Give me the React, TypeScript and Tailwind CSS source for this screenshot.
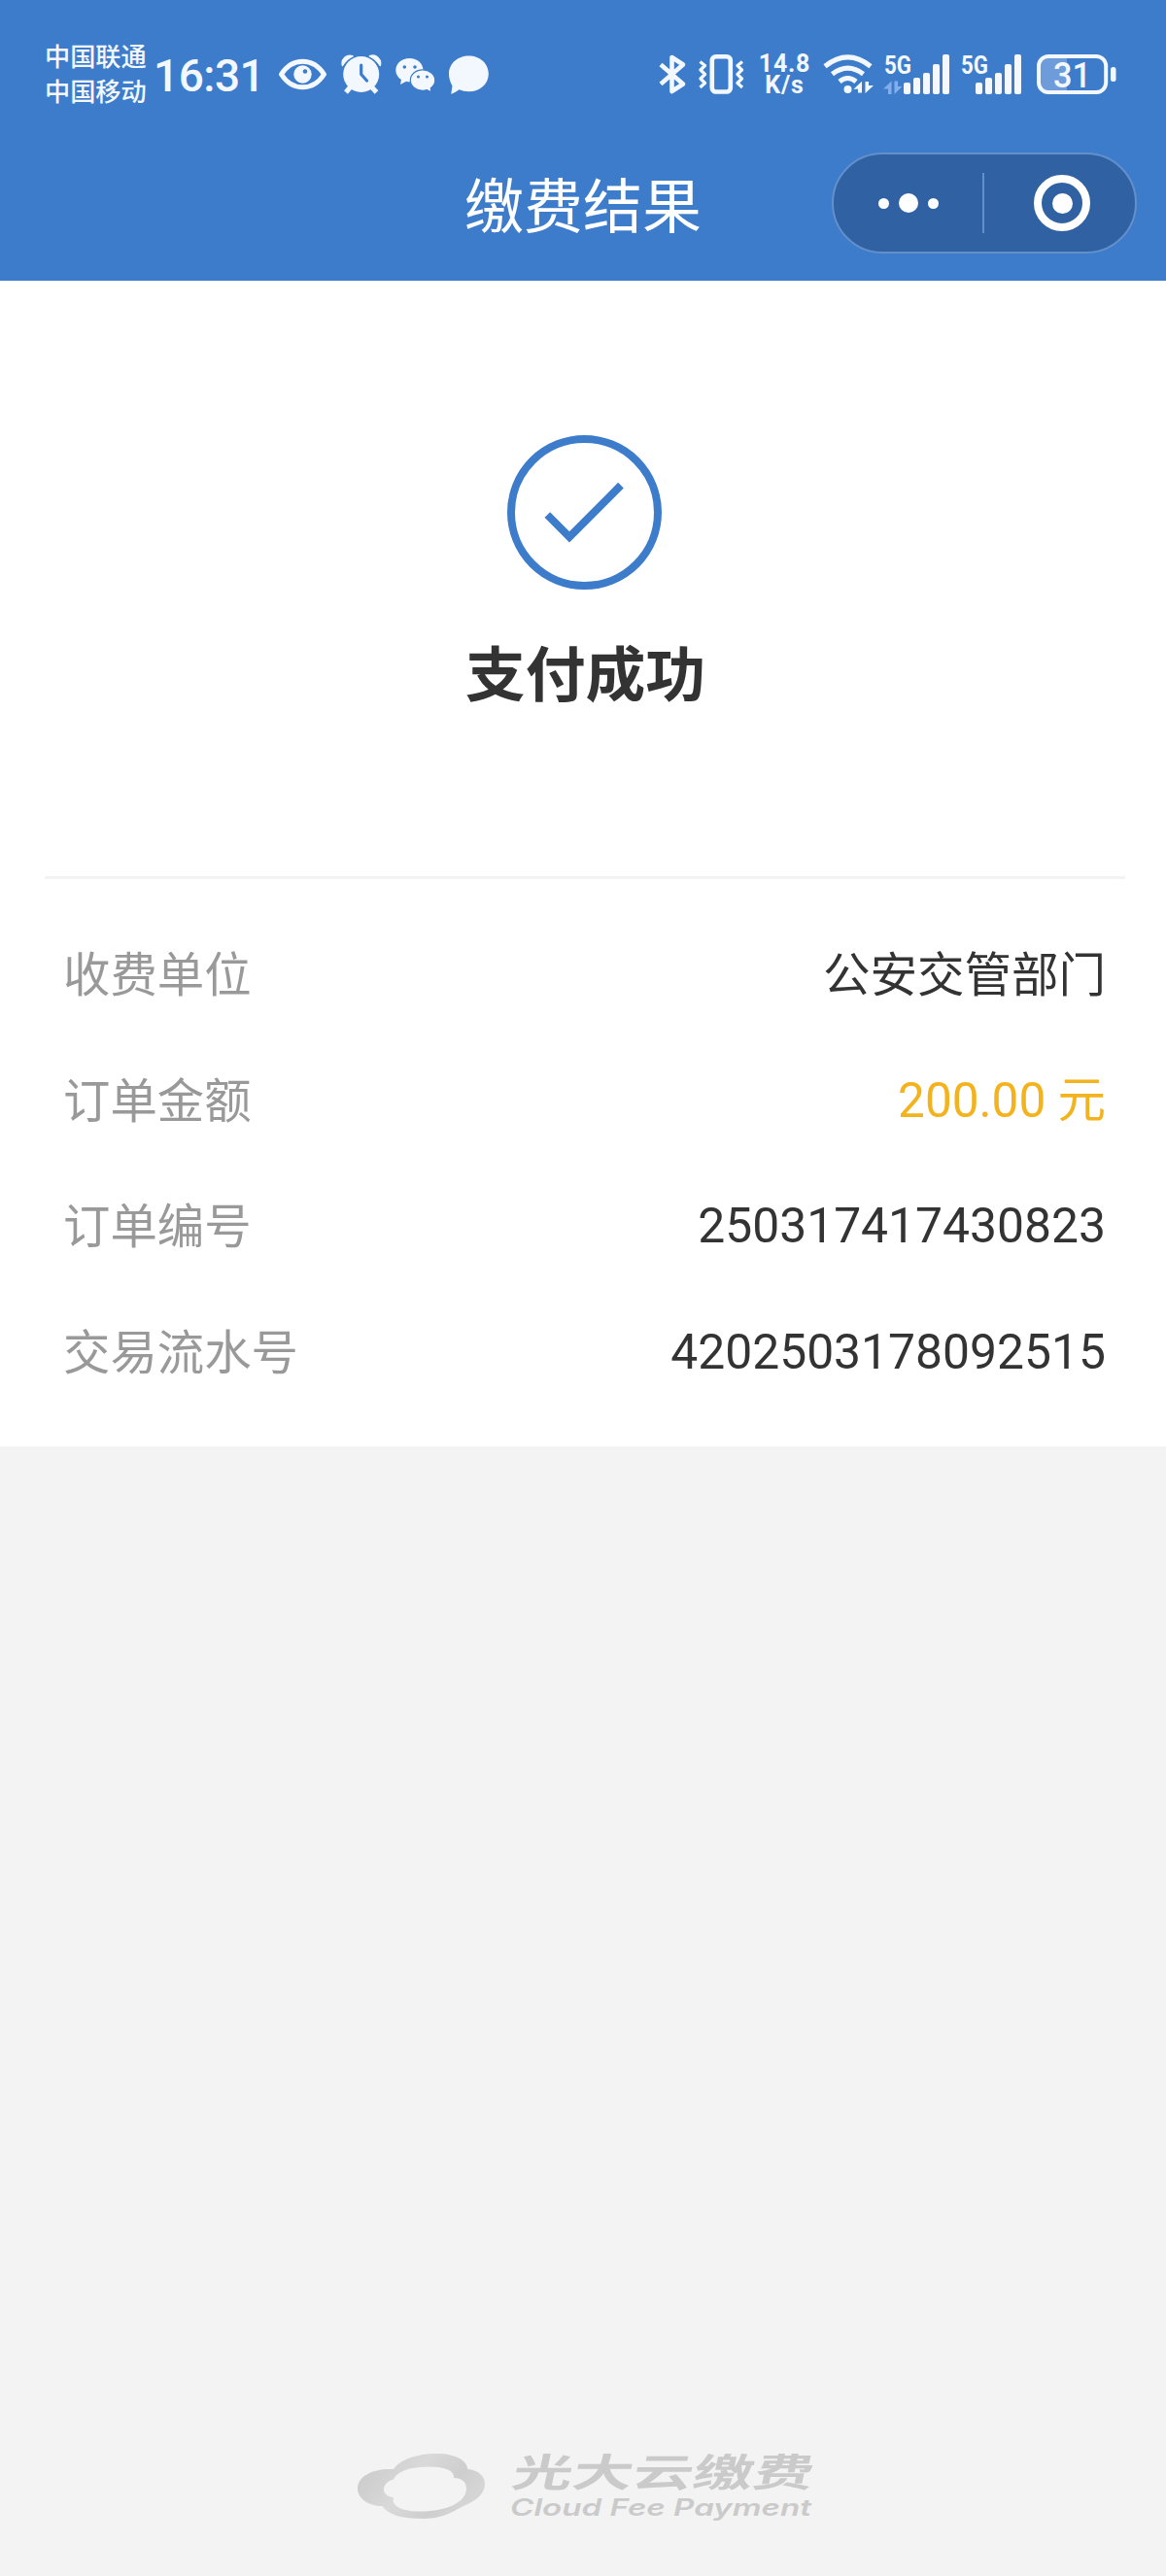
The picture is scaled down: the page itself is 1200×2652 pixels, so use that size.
import React from "react";

const ROBOTO = "font-['Roboto','Noto_Sans_CJK_SC',sans-serif]";
const ICE = "#f3f8ff";

function EyeIcon() {
  return (
    <svg className="ml-[20px] h-[45px] w-[50px] shrink-0" viewBox="287 54 50 45">
      <path d="M289.5 76.5Q298 63.2 311.500 63.200T333.500 76.500Q325 89.800 311.500 89.800T289.500 76.500Z" fill="none" stroke={ICE} strokeWidth="5" strokeLinejoin="round" />
      <circle cx="311.500" cy="76.500" r="9.200" fill={ICE} />
      <circle cx="314" cy="73.500" r="2.300" fill="#3d7ccb" />
    </svg>
  );
}

function AlarmIcon() {
  return (
    <svg className="ml-[14px] h-[45px] w-[42px] shrink-0" viewBox="351 54 42 45">
      <g stroke={ICE} strokeWidth="5" strokeLinecap="butt">
        <path d="M362 88L356 95M381 88L387.500 95" />
      </g>
      <path d="M352.500 67.500A8 8 0 0 1 363 57.800Q356 61 352.500 67.500ZM391.200 67.500A8 8 0 0 0 380.500 57.800Q387.500 61 391.200 67.500Z" fill={ICE} stroke={ICE} strokeWidth="1.500" strokeLinejoin="round" />
      <circle cx="371.700" cy="76.500" r="18.500" fill={ICE} />
      <path d="M371.700 67V76.500L377.500 83" fill="none" stroke="#3d7ccb" strokeWidth="3.200" strokeLinecap="round" />
    </svg>
  );
}

function WeChatIcon() {
  return (
    <svg className="ml-[13px] h-[45px] w-[44px] shrink-0" viewBox="406 54 44 45">
      <path d="M421.500 60C413.500 60 407.300 65.300 407.300 72.200C407.300 76.300 409.500 79.800 413 82L412 87L418.200 83.700Q420 84.200 421.500 84.200C429.300 84.200 435.500 79 435.500 72.200S429.300 60 421.500 60Z" fill={ICE} />
      <circle cx="416.300" cy="69" r="1.800" fill="#3d7ccb" />
      <circle cx="427" cy="69" r="1.800" fill="#3d7ccb" />
      <path d="M435 71.800C441.900 71.800 447.800 76.600 447.800 82.600C447.800 86.200 446 88.900 443.300 90.800L444 94.800L439.300 92.600Q437 93.300 435 93.300C428 93.300 422.300 88.600 422.300 82.600S428 71.800 435 71.800Z" fill={ICE} stroke="#3d7ccb" strokeWidth="1.200" />
      <circle cx="430.500" cy="79" r="1.500" fill="#3d7ccb" />
      <circle cx="439.500" cy="79" r="1.500" fill="#3d7ccb" />
    </svg>
  );
}

function BubbleIcon() {
  return (
    <svg className="ml-[11px] h-[45px] w-[43px] shrink-0" viewBox="461 54 43 45">
      <path d="M482.500 57.500C471 57.500 462 65.500 462 76C462 82 464.500 86.500 465.500 88.500L464.300 96.500Q464.800 97.500 472.500 92.300Q477 94.300 482.500 94.300C494 94.300 502.800 86.500 502.800 76S494 57.500 482.500 57.500Z" fill={ICE} />
    </svg>
  );
}

function BluetoothIcon() {
  return (
    <svg className="h-[45px] w-[30px] shrink-0" viewBox="677 54 30 45">
      <path d="M680 66.500L703 86.500L691.500 94V59L703 66.500L680 86.500" fill="none" stroke={ICE} strokeWidth="4.600" strokeLinejoin="round" strokeLinecap="butt" />
    </svg>
  );
}

function VibrateIcon() {
  return (
    <svg className="ml-[11px] h-[45px] w-[49px] shrink-0" viewBox="718 54 49 45">
      <rect x="732.800" y="58.300" width="19" height="36.200" rx="4" fill="none" stroke={ICE} strokeWidth="4.600" />
      <path d="M720.500 63.500L725.500 67.500L721 72L725.500 76.500L721 81L725.500 85.500L720.500 90M764 63.500L759 67.500L763.500 72L759 76.500L763.500 81L759 85.500L764 90" fill="none" stroke={ICE} strokeWidth="3.200" strokeLinejoin="round" />
    </svg>
  );
}

function WifiIcon() {
  return (
    <svg className="h-[45px] w-[54px] shrink-0" viewBox="846 54 54 45">
      <g fill="none" stroke={ICE} strokeWidth="5">
        <path d="M849 68.200Q872.500 49.500 896 68.200" />
        <path d="M856.500 76.200Q872.500 64 888.500 76.200" />
        <path d="M864 84Q872.500 77 881 84" />
      </g>
      <circle cx="872.500" cy="92" r="4" fill={ICE} />
      <path d="M887 83.800V95.500H883V91.800H878.500ZM890.500 96V84H894V88H899Z" fill={ICE} />
    </svg>
  );
}

type SignalProps = { data?: boolean };

function SignalIcon({ data = false }: SignalProps) {
  return (
    <svg className={data ? "ml-[9px] h-[45px] w-[70px] shrink-0 overflow-visible" : "ml-[8px] h-[45px] w-[66px] shrink-0 overflow-visible"} viewBox={data ? "909 54 70 45" : "913 54 66 45"}>
      <text x={data ? 910 : 915} y="76" className="font-['Roboto',sans-serif] text-[26px] font-bold" textLength="28" lengthAdjust="spacingAndGlyphs" fill={ICE}>5G</text>
      {data && <path d="M917.500 83.500V97H914V91.500H909.200ZM920.500 97V83.500H924V89H928.500Z" fill="#83adeb" />}
      <g fill={ICE}>
        <rect x="930" y="85" width="7" height="12" rx="2" />
        <rect x="940" y="80" width="7" height="17" rx="2" />
        <rect x="950" y="75" width="7" height="22" rx="2" />
        <rect x="960" y="66" width="7" height="31" rx="2" />
        <rect x="970" y="56" width="7" height="41" rx="2" />
      </g>
    </svg>
  );
}

function BatteryIcon() {
  return (
    <svg className="ml-[13px] h-[45px] w-[84px] shrink-0" viewBox="1066 54 84 45">
      <path d="M1098 58H1079Q1069 58 1069 68V85Q1069 95 1079 95H1098Z" fill="#6e9bd9" />
      <rect x="1069" y="58" width="69.200" height="37" rx="10" fill="none" stroke={ICE} strokeWidth="4" />
      <rect x="1143" y="69" width="5.500" height="15" rx="2.500" fill={ICE} />
      <text x="1084" y="90" className="font-['Roboto',sans-serif] text-[37px] font-medium" textLength="39" lengthAdjust="spacingAndGlyphs" fill={ICE}>31</text>
    </svg>
  );
}

function StatusBar() {
  return (
    <div className="flex h-[153px] items-center pl-[46px] text-[#f3f8ff]">
      <div className="w-[112px] shrink-0 pb-[4px] text-[26.2px] leading-[36px] font-medium">
        <div>中国联通</div>
        <div>中国移动</div>
      </div>
      <div className={`w-[109px] shrink-0 pt-[2px] text-[46px] leading-none font-medium tracking-[-0.5px] whitespace-nowrap ${ROBOTO}`}>16:31</div>
      <EyeIcon />
      <AlarmIcon />
      <WeChatIcon />
      <BubbleIcon />
      <div className="ml-[173px] flex items-center">
        <BluetoothIcon />
        <VibrateIcon />
        <div className={`ml-[13px] w-[55px] shrink-0 pt-px text-center text-[25px] leading-[22px] font-bold tracking-[0.8px] ${ROBOTO}`}>
          <div>14.8</div>
          <div>K/s</div>
        </div>
        <div className="ml-[11px] flex items-center">
          <WifiIcon />
          <SignalIcon data />
          <SignalIcon />
          <BatteryIcon />
        </div>
      </div>
    </div>
  );
}

function NavBar() {
  return (
    <div className="grid h-[136px] grid-cols-[478px_240px_1fr] items-start">
      <h1 className="col-start-2 mt-[13px] text-[61px] leading-[86px] font-normal whitespace-nowrap text-white">缴费结果</h1>
      <div className="mt-[4px] mr-[30px] flex h-[104px] w-[314px] items-center justify-self-end rounded-full border-2 border-[#638fcb] bg-[#3062a3]">
        <div className="flex w-[153px] items-center justify-center gap-[10px]">
          <span className="size-[11px] rounded-full bg-white" />
          <span className="size-[20px] rounded-full bg-white" />
          <span className="size-[11px] rounded-full bg-white" />
        </div>
        <div className="h-[62px] w-[2px] bg-[#638fcb]" />
        <div className="ml-[51px] flex size-[58px] items-center justify-center rounded-full border-[8px] border-white">
          <span className="size-[21px] rounded-full bg-white" />
        </div>
      </div>
    </div>
  );
}

const rows = [
  { label: "收费单位", value: "公安交管部门", style: "pt-[5px] text-[48.5px] text-[#333333]" },
  { label: "订单金额", value: "200.00 元", style: "text-[49.5px] text-[#f3b31e]" },
  { label: "订单编号", value: "250317417430823", style: "text-[49.8px] text-[#333333]" },
  { label: "交易流水号", value: "4202503178092515", style: "text-[49.8px] text-[#333333]" },
];

function BrandFooter() {
  return (
    <footer className="flex justify-center pb-[54px] pl-[6px]">
      <svg className="h-[76px] w-[478px] overflow-visible" viewBox="364 2522 478 76" role="img" aria-label="光大云缴费">
        <defs>
          <linearGradient id="cloud" x1="0" y1="0" x2="1" y2="0.4">
            <stop offset="0" stopColor="#c9c9c9" />
            <stop offset="0.25" stopColor="#d0d0d0" />
            <stop offset="0.5" stopColor="#d9d9d9" />
            <stop offset="0.8" stopColor="#cecece" />
            <stop offset="1" stopColor="#d5d5d5" />
          </linearGradient>
        </defs>
        <path
          fillRule="evenodd"
          fill="url(#cloud)"
          d="M405 2542C412 2532 430 2526 449 2526C467 2526 480 2532 481.500 2542C492 2543 499 2549 499 2557C499 2568 489 2575 477 2580C464 2587 454 2593 435 2593C414 2593 399 2589 393.500 2580C379 2580 368 2572 368 2562C368 2549 384 2541 405 2542ZM395 2563C395 2558 399 2554 405 2552.500C409 2544 422 2539.500 442 2539.500C456 2539.500 468 2543 467 2551C475 2551 480 2555 480 2562C480 2576 460 2585.500 433 2585.500C414 2585.500 402 2580 405 2571C399 2571 395 2567 395 2563Z"
        />
        <g fill="#cacaca">
          <text x="0" y="0" transform="translate(525 2559.500) skewX(-12)" className="font-['Noto_Sans_CJK_SC',sans-serif] text-[40px] font-bold" textLength="310" lengthAdjust="spacingAndGlyphs">光大云缴费</text>
          <text x="525" y="2589.500" className="font-['Inter',sans-serif] text-[24px] font-semibold italic" textLength="310" lengthAdjust="spacingAndGlyphs">Cloud Fee Payment</text>
        </g>
      </svg>
    </footer>
  );
}

export default function App() {
  return (
    <div className="flex min-h-[2652px] w-[1200px] flex-col bg-[#f3f3f3] font-['Noto_Sans_CJK_SC',sans-serif]">
      <header className="h-[289px] bg-[#3d7ccb]">
        <StatusBar />
        <NavBar />
      </header>
      <main className="h-[1200px] bg-white">
        <section className="mr-[42px] ml-[46px] flex h-[616px] flex-col items-center border-b-3 border-[#f3f3f3] pt-[158px]">
          <svg className="mr-px h-[161px] w-[161px]" viewBox="521 447 161 161">
            <circle cx="601.500" cy="527.500" r="75.500" fill="none" stroke="#3d7ccb" strokeWidth="8" />
            <path d="M563.300 530L586 552.800L639 499.700" fill="none" stroke="#3d7ccb" strokeWidth="8" />
          </svg>
          <h2 className="mt-[38px] pl-px text-[61.8px] leading-[88px] font-bold text-[#333333]">支付成功</h2>
        </section>
        <dl className="mt-[33px] mr-[62px] ml-[65px]">
          {rows.map((row) => (
            <div key={row.label} className="flex h-[129.7px] items-center justify-between">
              <dt className="pb-[6px] text-[48.4px] leading-[72px] text-[#999999]">{row.label}</dt>
              <dd className={`leading-[72px] ${ROBOTO} ${row.style}`}>{row.value}</dd>
            </div>
          ))}
        </dl>
      </main>
      <div className="flex-1" />
      <BrandFooter />
    </div>
  );
}
